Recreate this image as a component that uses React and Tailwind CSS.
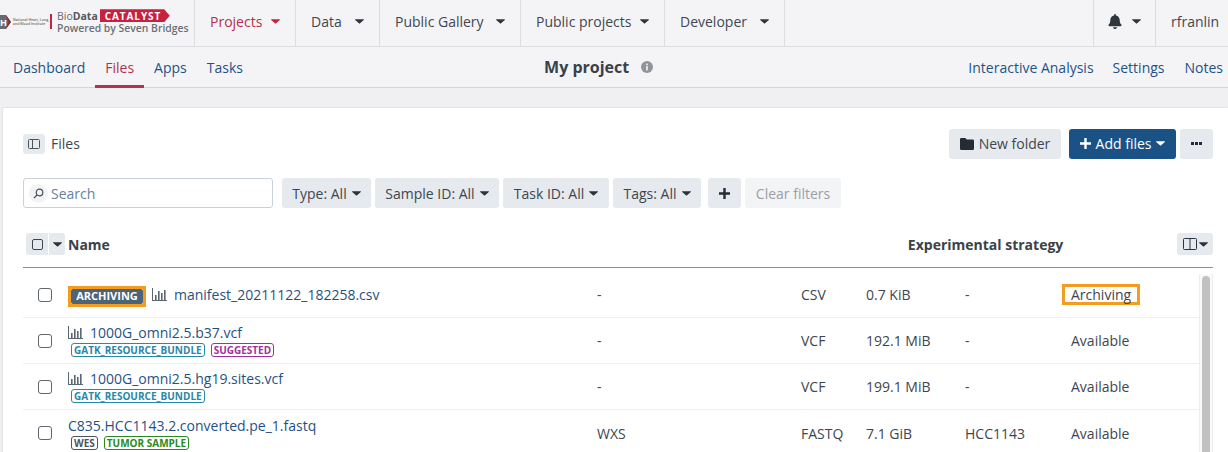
import React from "react";

const Caret = ({ className = "", w = 9, h = 5 }) => (
  <svg width={w} height={h} viewBox="0 0 10 5" className={className} fill="currentColor"><path d="M0.5 0h9a.4.4 0 0 1 .3.7L5.3 4.8a.5.5 0 0 1-.6 0L.2.7A.4.4 0 0 1 .5 0z" /></svg>
);

const Bars = () => (
  <svg width="16" height="13" viewBox="0 0 16 13" className="shrink-0 text-[#5a6772]" fill="currentColor">
    <rect x="0" y="0" width="1" height="13" /><rect x="0" y="12" width="15" height="1" />
    <rect x="3" y="7" width="1.600" height="5" /><rect x="6" y="3" width="1.600" height="9" /><rect x="9" y="5" width="1.600" height="7" /><rect x="12" y="2" width="1.600" height="10" />
  </svg>
);

const NavItem = ({ label, active, w }) => (
  <div className={`${w} h-full flex items-center justify-between pl-[15px] pr-[15px] pb-[3px] border-r border-[#dcdde0] text-[14px] ${active ? "text-[#b5304a]" : "text-[#3f4750]"}`}>
    <span>{label}</span>
    <Caret className={active ? "text-[#c8213f]" : "text-[#2f363d]"} />
  </div>
);

const Filter = ({ label, w }) => (
  <div className={`${w} h-[30px] rounded-[3px] bg-[#e6eaee] flex items-center justify-center gap-[5px] text-[14px] text-[#3d4650]`}>
    <span>{label}</span><Caret className="text-[#2b333b]" />
  </div>
);

const Tag = ({ children, c }) => (
  <span className={`h-[14px] px-[2px] rounded-[3px] border flex items-center text-[10px] font-bold leading-none ${c}`}>{children}</span>
);

const TEAL = "border-[#2a87a8] text-[#2a87a8]";

const Cb = () => <div className="w-[14px] h-[14px] border border-[#5f666d] rounded-[3px] bg-white" />;

const Row = ({ h, name, a, b, c, d, e, last, pad = "", namePad = "" }) => (
  <div className={`${h} ${pad} grid grid-cols-[45px_529px_204px_65px_99px_106px_1fr] items-center text-[14px] text-[#3d4650] ${last ? "" : "border-b border-[#eef0f2]"}`}>
    <div className="flex pl-[15px]"><Cb /></div>
    <div className={`min-w-0 ${namePad}`}>{name}</div>
    <div>{a}</div>
    <div>{b}</div>
    <div>{c}</div>
    <div>{d}</div>
    <div>{e}</div>
  </div>
);

const FileName = ({ children, bars, className = "" }) => (
  <div className={`flex items-center gap-[6px] h-[20px] text-[14px] text-[#1f5284] ${className}`}>
    {bars && <Bars />}<span>{children}</span>
  </div>
);

export default function App() {
  return (
    <div className="w-[1228px] h-[452px] overflow-hidden bg-[#f0f0f3] font-['Open_Sans',sans-serif] flex flex-col">
      <header className="h-[47px] shrink-0 bg-[#f4f4f7] border-b border-[#dcdde0] flex items-center text-[14px]">
        <div className="w-[195px] h-full border-r border-[#dcdde0] flex items-center overflow-hidden pb-[3px]">
          <div className="w-[52px] -ml-[1px] flex items-center shrink-0 gap-[2px]">
            <svg width="12" height="14" viewBox="0 0 12 14" className="shrink-0"><path d="M0 0h7l5 7-5 7H0z" fill="#6a6a6c" /><path d="M7 0l5 7-5 7 2-7z" fill="#8a3040" /><text x="1" y="10.500" fontSize="9" fontWeight="700" fill="#fff" fontFamily="Open Sans">H</text></svg>
            <div className="text-[3.5px] leading-[4px] text-[#666] whitespace-nowrap font-semibold">National Heart, Lung,<br />and Blood Institute</div>
          </div>
          <div className="w-[2px] h-[15px] bg-[#c8213f] ml-[-1px] mr-[5px] shrink-0" />
          <div className="flex flex-col leading-none shrink-0 -mt-[1px]">
            <div className="flex items-center h-[14px]">
              <span className="text-[10.500px] text-[#666a6e]">Bio<b className="text-[#55595d]">Data</b></span>
              <span className="ml-[2px] h-[13px] w-[70px] pl-[5px] bg-[#c8213f] text-white text-[10px] font-bold tracking-[0.9px] flex items-center [clip-path:polygon(0_0,92%_0,100%_50%,92%_100%,0_100%)]">CATALYST</span>
            </div>
            <div className="text-[10.400px] font-semibold text-[#6c7074] whitespace-nowrap">Powered by Seven Bridges</div>
          </div>
        </div>
        <NavItem label="Projects" active w="w-[101px]" />
        <NavItem label="Data" w="w-[84px]" />
        <NavItem label="Public Gallery" w="w-[141px]" />
        <NavItem label="Public projects" w="w-[144px]" />
        <NavItem label="Developer" w="w-[120px]" />
        <div className="flex-1" />
        <div className="w-[63px] h-full border-l border-r border-[#dcdde0] flex items-center justify-center gap-[10px] pb-[3px] text-[#2f363d]">
          <svg width="14" height="15" viewBox="0 0 448 512" fill="currentColor"><path d="M224 512c35 0 64-29 64-64H160c0 35 29 64 64 64zm215-150c-19-21-55-52-55-154 0-78-54-140-128-155V32a32 32 0 0 0-64 0v21C118 68 64 130 64 208c0 102-36 133-55 154-6 6-9 14-9 22 0 16 13 32 32 32h384c19 0 32-16 32-32 0-8-3-16-9-22z" /></svg>
          <Caret />
        </div>
        <div className="w-[72px] pl-[15px] pb-[3px] text-[#3f4750]">rfranlin</div>
      </header>

      <nav className="h-[41px] shrink-0 bg-[#f4f4f7] border-b border-[#d5d6d9] flex items-stretch text-[14px] text-[#1f5284]">
        <div className="flex pl-[13px] gap-[20px] items-stretch">
          <span className="flex items-center h-[40px]">Dashboard</span>
          <span className="flex items-center h-[41px] px-[10px] -mx-[10px] text-[#b5304a] border-b-[3px] border-[#b5304a] pt-[3px]">Files</span>
          <span className="flex items-center h-[40px]">Apps</span>
          <span className="flex items-center h-[40px]">Tasks</span>
        </div>
        <div className="flex-1 flex items-center justify-center pr-[14px] gap-[12px]">
          <span className="text-[16px] font-bold text-[#3a4149]">My project</span>
          <svg width="12" height="12" viewBox="0 0 12 12"><circle cx="6" cy="6" r="6" fill="#8f959b" /><rect x="5.200" y="5" width="1.600" height="4.400" fill="#f4f4f7" /><rect x="5.200" y="2.600" width="1.600" height="1.600" fill="#f4f4f7" /></svg>
        </div>
        <div className="flex items-center gap-[19px] pr-[5px]">
          <span>Interactive Analysis</span><span>Settings</span><span className="ml-[1px]">Notes</span>
        </div>
      </nav>

      <div className="h-[20px] shrink-0" />

      <main className="flex-1 ml-[3px] bg-white shadow-[0_0_2px_rgba(0,0,0,0.15)] pl-[20px] pr-[15px] min-h-0 overflow-hidden">
        <div className="h-[71px] flex items-center justify-between">
          <div className="flex items-center gap-[6px] text-[14px] text-[#3d4650]">
            <div className="w-[22px] h-[20px] rounded-[3px] bg-[#e6eaee] flex items-center justify-center">
              <svg width="12" height="12" viewBox="0 0 12 12" fill="none" stroke="#4a525a"><rect x="0.500" y="1.500" width="11" height="9" rx="1" /><path d="M4.500 1.500v9" /></svg>
            </div>
            <span>Files</span>
          </div>
          <div className="flex items-center gap-[8px]">
            <div className="w-[112px] h-[30px] rounded-[3px] bg-[#e6eaee] flex items-center justify-center gap-[5px] text-[14px] text-[#3d4650]">
              <svg width="14" height="12" viewBox="0 0 14 12" fill="#242c34"><path d="M1.300 0h4l1.400 1.600h6A1.300 1.300 0 0 1 14 3v7.700a1.300 1.300 0 0 1-1.300 1.300H1.300A1.300 1.300 0 0 1 0 10.700V1.300A1.300 1.300 0 0 1 1.300 0z" /></svg>
              <span>New folder</span>
            </div>
            <div className="w-[107px] h-[30px] rounded-[3px] bg-[#1a5286] flex items-center justify-center gap-[5px] text-[14px] font-medium text-white">
              <span className="flex items-center gap-[5px]"><svg width="11" height="11" viewBox="0 0 11 11" fill="white"><path d="M4.300 0h2.400v4.300H11v2.400H6.700V11H4.300V6.700H0V4.300h4.300z" /></svg>Add files</span>
              <Caret />
            </div>
            <div className="-ml-[4px] w-[33px] h-[30px] rounded-[3px] bg-[#e6eaee] flex items-center justify-center gap-[1.500px]">
              <i className="w-[2.500px] h-[3px] bg-[#242c34] block" /><i className="w-[2.500px] h-[3px] bg-[#242c34] block" /><i className="w-[2.500px] h-[3px] bg-[#242c34] block" />
            </div>
          </div>
        </div>

        <div className="flex items-center gap-[4px] h-[30px] mt-[-1px]">
          <div className="w-[250px] h-[30px] mr-[5px] rounded-[3px] border border-[#c9d2d8] bg-white flex items-center pl-[5px] gap-[3px]">
            <div className="w-[19px] h-[19px] rounded-full bg-[#f2f3f4] flex items-center justify-center">
              <svg width="11" height="11" viewBox="0 0 11 11" fill="none" stroke="#4a525a" strokeWidth="1.200"><circle cx="6.500" cy="4.500" r="3.300" /><path d="M4 7L1 10" /></svg>
            </div>
            <span className="text-[14px] text-[#66839b]">Search</span>
          </div>
          <Filter label="Type: All" w="w-[89px]" />
          <Filter label="Sample ID: All" w="w-[124px]" />
          <Filter label="Task ID: All" w="w-[106px]" />
          <Filter label="Tags: All" w="w-[88px]" />
          <div className="w-[33px] h-[30px] ml-[3px] rounded-[3px] bg-[#e6eaee] flex items-center justify-center">
            <svg width="11" height="11" viewBox="0 0 11 11" fill="#242c34"><path d="M4.300 0h2.400v4.300H11v2.400H6.700V11H4.300V6.700H0V4.300h4.300z" /></svg>
          </div>
          <div className="w-[96px] h-[30px] rounded-[3px] bg-[#f3f4f6] flex items-center justify-center text-[14px] text-[#9aa0a6]">Clear filters</div>
        </div>

        <div className="h-[60px] border-b border-[#8e8e8e] flex items-center pl-[3px] pt-[13px]">
          <div className="flex items-center h-[22px] gap-[1px]">
            <div className="w-[22px] h-[22px] rounded-l-[3px] bg-[#e6eaee] flex items-center justify-center"><div className="w-[11px] h-[11px] border border-[#3d4650] rounded-[2px]" /></div>
            <div className="w-[16px] h-[22px] rounded-r-[3px] bg-[#e6eaee] flex items-center justify-center"><Caret className="text-[#2b333b]" /></div>
          </div>
          <span className="ml-[3px] text-[14px] font-bold text-[#3a4149]">Name</span>
          <span className="ml-[798px] text-[14px] font-bold text-[#3a4149] whitespace-nowrap">Experimental strategy</span>
          <div className="ml-auto w-[36px] h-[22px] rounded-[3px] bg-[#e6eaee] flex items-center justify-center gap-[2px]">
            <svg width="14" height="12" viewBox="0 0 14 12" fill="none" stroke="#2b333b"><rect x="0.500" y="0.500" width="13" height="11" rx="1" /><path d="M7 .5v11" /></svg>
            <Caret className="text-[#2b333b]" />
          </div>
        </div>

        <div className="flex">
          <div className="flex-1 min-w-0">
            <Row h="h-[50px]" pad="pt-[4px]" a="-" b="CSV" c="0.7 KiB" d="-" e={<span className="inline-block border-[3px] border-[#f39c1f] px-[6px] h-[21px] leading-[15px] -ml-[9px]">Archiving</span>}
              name={
                <div className="flex items-center gap-[6px]">
                  <div className="mt-[3px] border-[3px] border-[#f39c1f] bg-[#f5c577]/30 h-[21px] flex items-center">
                    <span className="h-[15px] w-[72px] flex items-center justify-center rounded-[2px] bg-[#4d6377] text-white text-[11px] font-bold">ARCHIVING</span>
                  </div>
                  <FileName bars>manifest_20211122_182258.csv</FileName>
                </div>
              } />
            <Row h="h-[46px]" namePad="pb-[2px]" a="-" b="VCF" c="192.1 MiB" d="-" e="Available"
              name={<><FileName bars>1000G_omni2.5.b37.vcf</FileName><div className="flex gap-[6px] pl-[3px]"><Tag c={TEAL}>GATK_RESOURCE_BUNDLE</Tag><Tag c="border-[#a0309b] text-[#a0309b]">SUGGESTED</Tag></div></>} />
            <Row h="h-[46px]" namePad="pb-[2px]" a="-" b="VCF" c="199.1 MiB" d="-" e="Available"
              name={<><FileName bars>1000G_omni2.5.hg19.sites.vcf</FileName><div className="flex gap-[6px] pl-[3px]"><Tag c={TEAL}>GATK_RESOURCE_BUNDLE</Tag></div></>} />
            <Row h="h-[46px]" namePad="pb-[1px]" last a="WXS" b="FASTQ" c="7.1 GiB" d="HCC1143" e="Available"
              name={<><FileName className="mb-[1px]">C835.HCC1143.2.converted.pe_1.fastq</FileName><div className="flex gap-[6px] pl-[3px]"><Tag c="border-[#4a5560] text-[#4a5560]">WES</Tag><Tag c="border-[#2a8a24] text-[#2a8a24]">TUMOR SAMPLE</Tag></div></>} />
          </div>
          <div className="w-[14px] shrink-0 border-l border-r border-[#eceef0] bg-[#fafafa] mt-[6px] flex justify-center pt-[2px]">
            <div className="w-[8px] h-[180px] rounded-full bg-[#c1c1c1]" />
          </div>
        </div>
      </main>
    </div>
  );
}
